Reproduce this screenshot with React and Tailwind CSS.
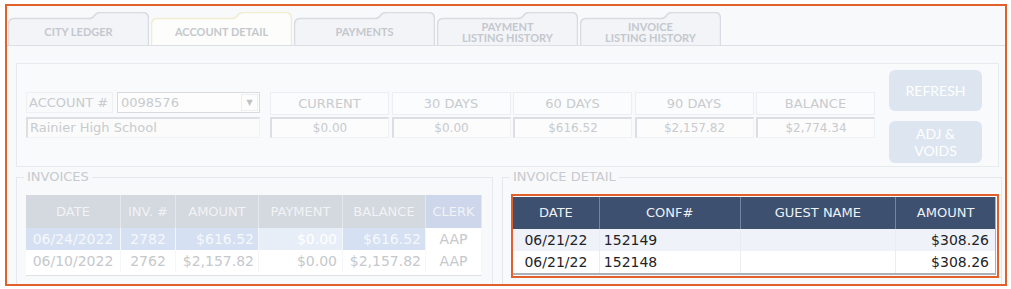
import React from 'react';

const tabs = [
    { label: ['CITY LEDGER'] },
    { label: ['ACCOUNT DETAIL'], active: true },
    { label: ['PAYMENTS'] },
    { label: ['PAYMENT', 'LISTING HISTORY'] },
    { label: ['INVOICE', 'LISTING HISTORY'] },
];

const aging = [
    { label: 'CURRENT', value: '$0.00' },
    { label: '30 DAYS', value: '$0.00' },
    { label: '60 DAYS', value: '$616.52' },
    { label: '90 DAYS', value: '$2,157.82' },
    { label: 'BALANCE', value: '$2,774.34' },
];

const invoiceCols = [
    { label: 'DATE', w: 'w-[95px]', align: 'justify-center' },
    { label: 'INV. #', w: 'w-[55px]', align: 'justify-center' },
    { label: 'AMOUNT', w: 'w-[83px]', align: 'justify-end pr-[4px]' },
    { label: 'PAYMENT', w: 'w-[84px]', align: 'justify-end pr-[5px]' },
    { label: 'BALANCE', w: 'w-[83px]', align: 'justify-end pr-[4px]' },
    { label: 'CLERK', w: 'w-[56px]', align: 'justify-center' },
];

const invoices = [
    { cells: ['06/24/2022', '2782', '$616.52', '$0.00', '$616.52', 'AAP'], selected: true },
    { cells: ['06/10/2022', '2762', '$2,157.82', '$0.00', '$2,157.82', 'AAP'] },
];

const detailCols = [
    { label: 'DATE', w: 'w-[87px]', align: 'justify-center' },
    { label: 'CONF#', w: 'w-[141px]', align: 'justify-start pl-[4px]' },
    { label: 'GUEST NAME', w: 'w-[156px]', align: 'justify-start' },
    { label: 'AMOUNT', w: 'w-[99px]', align: 'justify-end pr-[6px]' },
];

const details = [
    ['06/21/22', '152149', '', '$308.26'],
    ['06/21/22', '152148', '', '$308.26'],
];

const sans = "font-['DejaVu_Sans',Verdana,sans-serif]";
const lato = "font-['Lato','Open_Sans',sans-serif]";

const Tab = ({ tab }) => (
    <div className="relative w-[141px] h-[33px]">
        <svg className="absolute inset-0" width="141" height="33" viewBox="0 0 141 33">
            <path
                d="M0.5 33 V12.5 Q0.5 6.5 6.5 6.5 H81 Q84.5 6.5 86.5 3.5 Q88.5 0.5 92 0.5 H134.5 Q140.5 0.5 140.5 6.5 V33"
                fill={tab.active ? '#fdfdfc' : '#f3f4f7'}
                stroke={tab.active ? '#f1edcf' : '#d8dbe1'}
                strokeWidth="1.5"
            />
        </svg>
        <div className={`relative h-full pt-[6px] flex flex-col items-center justify-center ${lato} font-bold text-[11px] leading-[11px] text-[#c4c8ce]`}>
            {tab.label.map(l => <span key={l}>{l}</span>)}
        </div>
    </div>
);

const App = () => {
    return (
        <div className="w-[1011px] h-[289px] bg-white pt-[4px] pl-[5px]">
            <div className="w-[1002px] h-[282px] border-2 border-[#e2612a] bg-[#f8f9fb] overflow-hidden">
                {/* tabs */}
                <div className="flex gap-[2px] pl-[1px] pt-[6px] border-b border-[#dcdfe4]">
                    {tabs.map(t => <Tab key={t.label.join()} tab={t} />)}
                </div>

                <div className="pl-[9px]">
                    {/* account panel */}
                    <div className="mt-[17px] w-[983px] h-[104px] border border-[#e7eaee] bg-[#f9fafc] flex items-center pl-[9px]">
                        <div className={`w-[234px] ${sans} text-[13px] text-[#c8cbce]`}>
                            <div className="flex h-[21px] gap-[4px]">
                                <div className="w-[87px] flex items-center pl-[2px] border border-[#eef0f2]">ACCOUNT #</div>
                                <div className="flex-1 flex items-center justify-between border border-[#d9dbdf] bg-[#fdfdfd] pl-[3px] pr-[1px]">
                                    <span>0098576</span>
                                    <span className="w-[17px] h-[17px] flex items-center justify-center border border-[#eceef0] text-[8px] text-[#bfc2c6]">▼</span>
                                </div>
                            </div>
                            <div className="mt-[4px] h-[21px] flex items-center pl-[2px] border-t-2 border-l-2 border-[#dddfe2] border-r border-b border-r-[#f2f3f5] border-b-[#f2f3f5] bg-[#fbfbfc]">
                                Rainier High School
                            </div>
                        </div>

                        <div className="ml-[10px] flex gap-[2.5px]">
                            {aging.map(a => (
                                <div key={a.label} className={`w-[119px] ${sans} text-[#c8cbce]`}>
                                    <div className="h-[23px] flex items-center justify-center border border-[#eceef1] bg-[#fbfcfd] text-[13px]">
                                        {a.label}
                                    </div>
                                    <div className="mt-[2px] h-[21px] flex items-center justify-center border-t-2 border-l-2 border-[#dcdee1] border-r border-b border-r-[#f0f1f3] border-b-[#f0f1f3] bg-[#fcfcfd] text-[12px]">
                                        {a.value}
                                    </div>
                                </div>
                            ))}
                        </div>

                        <div className={`ml-[14px] mt-[3px] flex flex-col gap-[10px] ${lato} text-[14px] text-white`}>
                            <div className="w-[93px] h-[41px] rounded-[6px] bg-[#dde5f0] flex items-center justify-center">REFRESH</div>
                            <div className="w-[93px] h-[42px] rounded-[6px] bg-[#dde5f0] flex flex-col items-center justify-center leading-[17px]">
                                <span>ADJ &amp;</span>
                                <span>VOIDS</span>
                            </div>
                        </div>
                    </div>

                    {/* lower section */}
                    <div className="mt-[2px] flex gap-[9px]">
                        <fieldset className="w-[477px] h-[150px] border border-[#e5e8ec] px-[9px] pt-[10px]">
                            <legend className={`-ml-[2px] px-[3px] ${sans} text-[13px] leading-[16px] text-[#c7cace]`}>INVOICES</legend>
                            <div className={`w-[456px] ${sans} bg-white border-b border-[#dfe2e6] h-[81px]`}>
                                <div className="flex h-[33px]">
                                    {invoiceCols.map(c => (
                                        <div
                                            key={c.label}
                                            className={`${c.w} flex items-center justify-center text-[13px] text-[#f1f3f6] border-r border-[#e4e7ec] ${c.label === 'CLERK' ? 'bg-[#cdd6ea]' : 'bg-[#d4d8df]'}`}
                                        >
                                            {c.label}
                                        </div>
                                    ))}
                                </div>
                                {invoices.map(r => (
                                    <div key={r.cells[1]} className="flex h-[22px]">
                                        {r.cells.map((v, i) => {
                                            const col = invoiceCols[i];
                                            let bg = 'bg-white text-[#c5c8cc]';
                                            if (r.selected && i < 5) bg = i === 3 ? 'bg-[#e8eef8] text-white' : 'bg-[#d5e0f2] text-[#f6f8fc]';
                                            return (
                                                <div key={i} className={`${col.w} flex items-center ${col.align} text-[14px] border-r border-[#f4f6f9] ${bg}`}>
                                                    {v}
                                                </div>
                                            );
                                        })}
                                    </div>
                                ))}
                            </div>
                        </fieldset>

                        <fieldset className="w-[500px] h-[150px] border border-[#e5e8ec] pl-[8px] pt-[9px]">
                            <legend className={`-ml-[1px] px-[3px] ${sans} text-[13px] leading-[16px] text-[#c7cace]`}>INVOICE DETAIL</legend>
                            <div className="w-[488px] h-[84px] border-2 border-[#e2612a] pl-0 pt-[1px]">
                                <div className={`w-[483px] ${sans} border-r border-b-2 border-[#a9b1bc] bg-white`}>
                                    <div className="flex h-[32px] bg-[#3d5070]">
                                        {detailCols.map((c, i) => (
                                            <div
                                                key={c.label}
                                                className={`${c.w} flex items-center justify-center text-[13px] text-[#eef1f6] ${i < 3 ? 'border-r border-[#7485a0]' : ''}`}
                                            >
                                                {c.label}
                                            </div>
                                        ))}
                                    </div>
                                    {details.map((r, ri) => (
                                        <div key={r[1]} className={`flex h-[22px] ${ri === 0 ? 'bg-[#eff3f9]' : 'bg-white'}`}>
                                            {r.map((v, i) => (
                                                <div
                                                    key={i}
                                                    className={`${detailCols[i].w} flex items-center ${detailCols[i].align} text-[14px] text-[#1f2328] ${i < 3 ? 'border-r border-[#e9edf2]' : ''}`}
                                                >
                                                    {v}
                                                </div>
                                            ))}
                                        </div>
                                    ))}
                                </div>
                            </div>
                        </fieldset>
                    </div>
                </div>
            </div>
        </div>
    );
};

export default App;
